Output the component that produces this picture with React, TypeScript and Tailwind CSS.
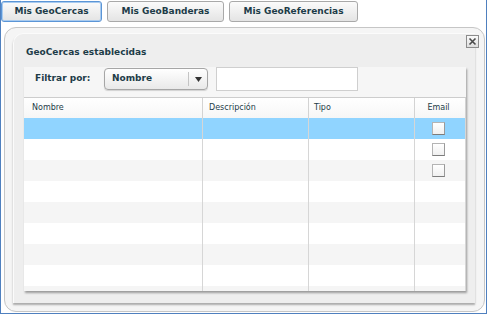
import React from 'react';

const tabs = [
  { label: 'Mis GeoCercas', width: 'w-[101px]', active: true },
  { label: 'Mis GeoBanderas', width: 'w-[117px]', active: false },
  { label: 'Mis GeoReferencias', width: 'w-[129px]', active: false },
];

const rows = Array.from({ length: 9 }, (_, i) => i);

const Checkbox = () => (
  <div className="w-[13px] h-[13px] border border-[#b4b4b4] border-b-[#7c7c7c] border-r-[#9a9a9a] bg-gradient-to-b from-white to-[#f0f0f0]" />
);

export default function App() {
  return (
    <div className="w-[487px] h-[314px] bg-white border-x border-b border-[#4f80bf] font-['DejaVu_Sans',sans-serif] text-[#1d3c48] overflow-hidden">
      {/* Tabs */}
      <div className="flex gap-[5px] pt-[1px]">
        {tabs.map((t) => (
          <div
            key={t.label}
            className={`${t.width} h-[21px] flex items-center justify-center rounded-[3px] border text-[9px] font-bold bg-gradient-to-b from-[#fbfbfb] to-[#e4e4e4] ${
              t.active ? 'border-[#5b95d6] shadow-[inset_0_0_0_1px_#a9cbef]' : 'border-[#a9a9a9]'
            }`}
          >
            {t.label}
          </div>
        ))}
      </div>

      {/* Outer window */}
      <div className="relative ml-[3px] mt-[5px] w-[481px] h-[285px] rounded-[12px] border border-[#c6c6c6] bg-[#f5f5f5]">
        <div className="absolute left-[461px] top-[7px] w-[13px] h-[13px] border border-[#8c8c8c] bg-gradient-to-b from-[#fafafa] to-[#dedede] flex items-center justify-center">
          <svg width="9" height="9" viewBox="0 0 9 9">
            <path d="M1.5 1.5 L7.5 7.5 M7.5 1.5 L1.5 7.5" stroke="#4a4a4a" strokeWidth="1.6" />
          </svg>
        </div>

        {/* Inner panel */}
        <div className="ml-[8px] mt-[5px] w-[462px] h-[270px] rounded-tl-[10px] border-l border-t border-[#fbfbfb] bg-[#eeeeee] shadow-[0_2px_2px_rgba(0,0,0,0.3)]">
          <div className="pt-[12px] pl-[12px] h-[24px] text-[9px] font-bold leading-[12px]">GeoCercas establecidas</div>

          {/* Grid panel */}
          <div className="ml-[10px] mt-[9px] w-[442px] h-[224px] bg-white overflow-hidden shadow-[1px_2px_2px_rgba(0,0,0,0.35)]">
            {/* Toolbar */}
            <div className="h-[30px] pb-[6px] bg-[#f6f6f6] flex items-center">
              <span className="ml-[11px] w-[69px] text-[9px] font-bold">Filtrar por:</span>
              <div className="w-[104px] h-[22px] rounded-[4px] border border-[#a6a6a6] bg-gradient-to-b from-white to-[#e9e9e9] flex items-center shadow-[0_1px_1px_rgba(0,0,0,0.15)]">
                <span className="flex-1 pl-[7px] text-[9px] font-bold">Nombre</span>
                <div className="w-[19px] h-[14px] border-l border-[#c4c4c4] flex items-center justify-center">
                  <svg width="7" height="5" viewBox="0 0 7 5">
                    <path d="M0 0 H7 L3.5 5 Z" fill="#333" />
                  </svg>
                </div>
              </div>
              <div className="ml-[8px] w-[142px] h-[24px] bg-white border border-[#cfcfcf]" />
            </div>

            {/* Header */}
            <div className="grid grid-cols-[179px_106px_106px_51px] h-[21px] border-t border-[#cdcdcd] bg-gradient-to-b from-white to-[#f6f6f6] text-[8px] leading-[20px]">
              <div className="pl-[8px] border-r border-[#d3d3d3]">Nombre</div>
              <div className="pl-[6px] border-r border-[#d3d3d3]">Descripción</div>
              <div className="pl-[5px] border-r border-[#d3d3d3]">Tipo</div>
              <div className="text-center pr-[3px] border-r border-[#d3d3d3]">Email</div>
            </div>

            {/* Rows */}
            {rows.map((i) => (
              <div
                key={i}
                className={`grid grid-cols-[179px_106px_106px_51px] h-[21px] ${
                  i === 0 ? 'bg-[#90d4ff]' : i % 2 === 1 ? 'bg-white' : 'bg-[#f5f5f5]'
                }`}
              >
                <div className="border-r border-[#d6d6d6]" />
                <div className="border-r border-[#d6d6d6]" />
                <div className="border-r border-[#d6d6d6]" />
                <div className="border-r border-[#d6d6d6] flex items-center pl-[17px]">
                  {i < 3 && <Checkbox />}
                </div>
              </div>
            ))}
          </div>
        </div>
      </div>
    </div>
  );
}
